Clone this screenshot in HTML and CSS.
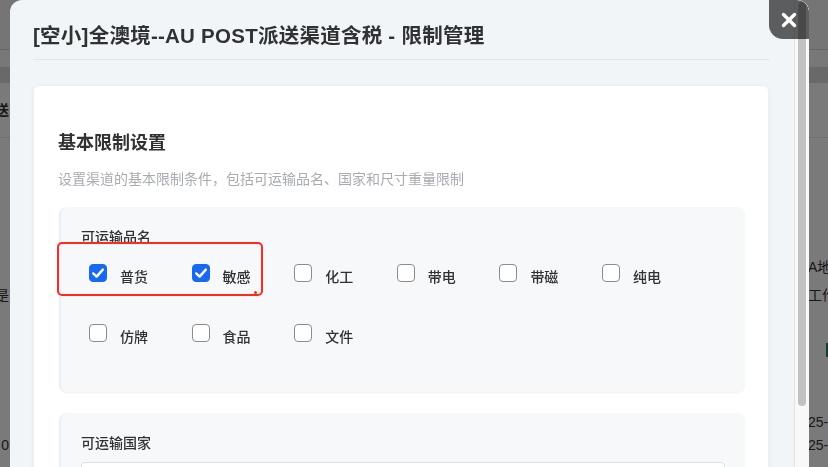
FILE: index.html
```html
<!DOCTYPE html>
<html lang="zh-CN">
<head>
<meta charset="utf-8">
<title>限制管理</title>
<link rel="stylesheet" href="styles.css">
</head>
<body>
<div class="page">
  <div class="topbar"></div>
  <div class="tabs"></div>
  <div class="thead"></div>
  <div class="row row-a"><span class="lc">渠道派送</span><span class="rc"></span></div>
  <div class="row row-b"><span class="lc"></span><span class="rc">A地址</span></div>
  <div class="row row-c"><span class="lc">是</span><span class="rc">工作日</span></div>
  <div class="row row-d"><span class="lc"></span><span class="rc"><i class="tag"></i></span></div>
  <div class="row row-e"><span class="lc"></span><span class="rc">25-05</span></div>
  <div class="row row-f"><span class="lc">0</span><span class="rc">25-05</span></div>
</div>
<div class="mask"></div>
<div class="dialog">
  <div class="dialog-main">
    <div class="dialog-header">
      <h2 class="dialog-title">[空小]全澳境--AU POST派送渠道含税 - 限制管理</h2>
    </div>
    <div class="card">
      <h3 class="card-title">基本限制设置</h3>
      <p class="card-desc">设置渠道的基本限制条件，包括可运输品名、国家和尺寸重量限制</p>
      <section class="panel">
        <div class="panel-label">可运输品名</div>
        <div class="check-grid">
          <label class="check"><span class="box on"><svg viewBox="0 0 18 18"><path d="M4.2 9.4 L7.6 12.6 L13.8 5.6" /></svg></span><span class="txt">普货</span></label>
          <label class="check"><span class="box on"><svg viewBox="0 0 18 18"><path d="M4.2 9.4 L7.6 12.6 L13.8 5.6" /></svg></span><span class="txt">敏感</span></label>
          <label class="check"><span class="box"></span><span class="txt">化工</span></label>
          <label class="check"><span class="box"></span><span class="txt">带电</span></label>
          <label class="check"><span class="box"></span><span class="txt">带磁</span></label>
          <label class="check"><span class="box"></span><span class="txt">纯电</span></label>
          <label class="check"><span class="box"></span><span class="txt">仿牌</span></label>
          <label class="check"><span class="box"></span><span class="txt">食品</span></label>
          <label class="check"><span class="box"></span><span class="txt">文件</span></label>
        </div>
        <div class="annot"></div>
        <div class="annot-dot"></div>
      </section>
      <section class="panel panel-2">
        <div class="panel-label">可运输国家</div>
        <div class="select"></div>
      </section>
    </div>
  </div>
  <div class="vscroll"><div class="thumb"></div></div>
  <button class="close" aria-label="关闭"><svg viewBox="0 0 16 16"><path d="M2.5 2.5 L13.5 13.5 M13.5 2.5 L2.5 13.5" /></svg></button>
</div>
</body>
</html>
```
FILE: styles.css
```css
* { box-sizing: border-box; }
html, body { margin: 0; padding: 0; }
body {
  width: 828px;
  height: 467px;
  overflow: hidden;
  font-family: "Liberation Sans", "Noto Sans CJK SC", "Noto Sans", sans-serif;
  color: #303133;
  background: #ffffff;
}

/* background page */
.page { display: flex; flex-direction: column; }
.topbar { height: 50px; background: #f4f4f4; border-bottom: 1px solid #d8d8d8; }
.tabs { height: 17px; background: #fbfbfb; }
.thead { height: 16px; background: #dcdcdc; }
.row { display: flex; justify-content: space-between; border-bottom: 1px solid #e8e8e8; font-size: 14px; color: #333; }
.lc { width: 9px; display: flex; justify-content: flex-end; overflow: hidden; white-space: nowrap; }
.rc { width: 20px; overflow: hidden; white-space: nowrap; }
.row-a { height: 55px; align-items: center; padding-bottom: 2px; font-weight: 700; }
.row-b { height: 140px; align-items: flex-end; padding-bottom: 2px; border-bottom: none; }
.row-c { height: 32px; align-items: center; border-bottom: none; }
.row-d { height: 80px; align-items: center; border-bottom: none; }
.row-d .tag { display: block; width: 6px; height: 14px; margin-left: 18px; background: #1f8a5a; }
.row-e { height: 40px; align-items: flex-end; border-bottom: none; }
.row-f { height: 30px; align-items: center; border-bottom: none; }

.mask { position: fixed; inset: 0; background: rgba(0, 0, 0, 0.52); }

/* dialog */
.dialog {
  position: fixed;
  left: 10px;
  top: 0;
  width: 799px;
  height: 480px;
  background: #f2f5f8;
  border-radius: 12px 12px 0 0;
  display: flex;
  overflow: hidden;
}
.dialog-main { flex: 1; padding: 0 25px 0 23px; }
.dialog-header { padding: 22px 0 9px; border-bottom: 1px solid #e2e6ec; margin-right: -1px; }
.dialog-title { margin: 0; font-size: 20.5px; line-height: 28px; font-weight: 600; color: #303133; letter-spacing: 0.25px; white-space: nowrap; }

.card {
  margin-top: 25px;
  background: #ffffff;
  border: 1px solid #eceff4;
  border-radius: 6px;
  box-shadow: 0 1px 4px rgba(0, 0, 0, 0.05);
  padding: 45px 23px 40px 25px;
}
.card-title { margin: 0 0 0 -1px; font-size: 18px; line-height: 24px; font-weight: 600; color: #303133; }
.card-desc { margin: 14px 0 0 -1px; font-size: 14px; line-height: 20px; color: #a8abb2; }

.panel {
  position: relative;
  margin-top: 18px;
  background: #f7f8fa;
  border-left: 2px solid #e9eefa;
  border-radius: 8px;
  box-shadow: 0 1px 2px rgba(0, 0, 0, 0.06);
  padding: 20px 20px 47px 20px;
}
.panel-2 { margin-top: 21px; padding-bottom: 20px; }
.panel-label { font-size: 14px; line-height: 20px; font-weight: 500; color: #303133; }

.check-grid {
  margin: 14px 0 0 8px;
  display: grid;
  grid-template-columns: repeat(6, 102.6px);
  row-gap: 36px;
}
.check { display: flex; align-items: center; height: 24px; }
.box {
  width: 18px;
  height: 18px;
  border: 1px solid #8a8c90;
  border-radius: 4px;
  background: #ffffff;
  flex: none;
  display: flex;
}
.box.on { background: #1769f2; border-color: #1769f2; }
.box svg { width: 18px; height: 18px; margin: -1px; }
.box svg path { fill: none; stroke: #ffffff; stroke-width: 2.4; stroke-linecap: round; stroke-linejoin: round; }
.txt { margin-left: 13px; padding-top: 8px; font-size: 14px; line-height: 20px; font-weight: 500; color: #303133; }

.select {
  margin-top: 9px;
  height: 36px;
  background: #ffffff;
  border: 1px solid #dcdfe6;
  border-radius: 4px;
}

/* annotation overlay */
.annot {
  position: absolute;
  left: -4px;
  top: 35px;
  width: 206px;
  height: 54px;
  border: 2px solid #ff2a1c;
  border-radius: 5px;
}
.annot-dot {
  position: absolute;
  left: 193px;
  top: 84px;
  width: 3px;
  height: 3px;
  border-radius: 50%;
  background: #ff2a1c;
}

/* scrollbar */
.vscroll { width: 15px; flex: none; background: #f8f8f8; border-left: 1px solid #e0e2e6; padding: 2px 0 0 3px; }
.thumb { width: 8px; height: 404px; border-radius: 4px; background: #c1c1c1; }

.close {
  position: absolute;
  right: 0;
  top: 0;
  width: 40px;
  height: 39px;
  border: none;
  padding: 0;
  background: rgba(0, 0, 0, 0.62);
  border-radius: 0 12px 0 14px;
  display: flex;
  align-items: center;
  justify-content: center;
}
.close svg { width: 16px; height: 16px; }
.close svg path { stroke: #ffffff; stroke-width: 3.4; stroke-linecap: round; fill: none; }
```
